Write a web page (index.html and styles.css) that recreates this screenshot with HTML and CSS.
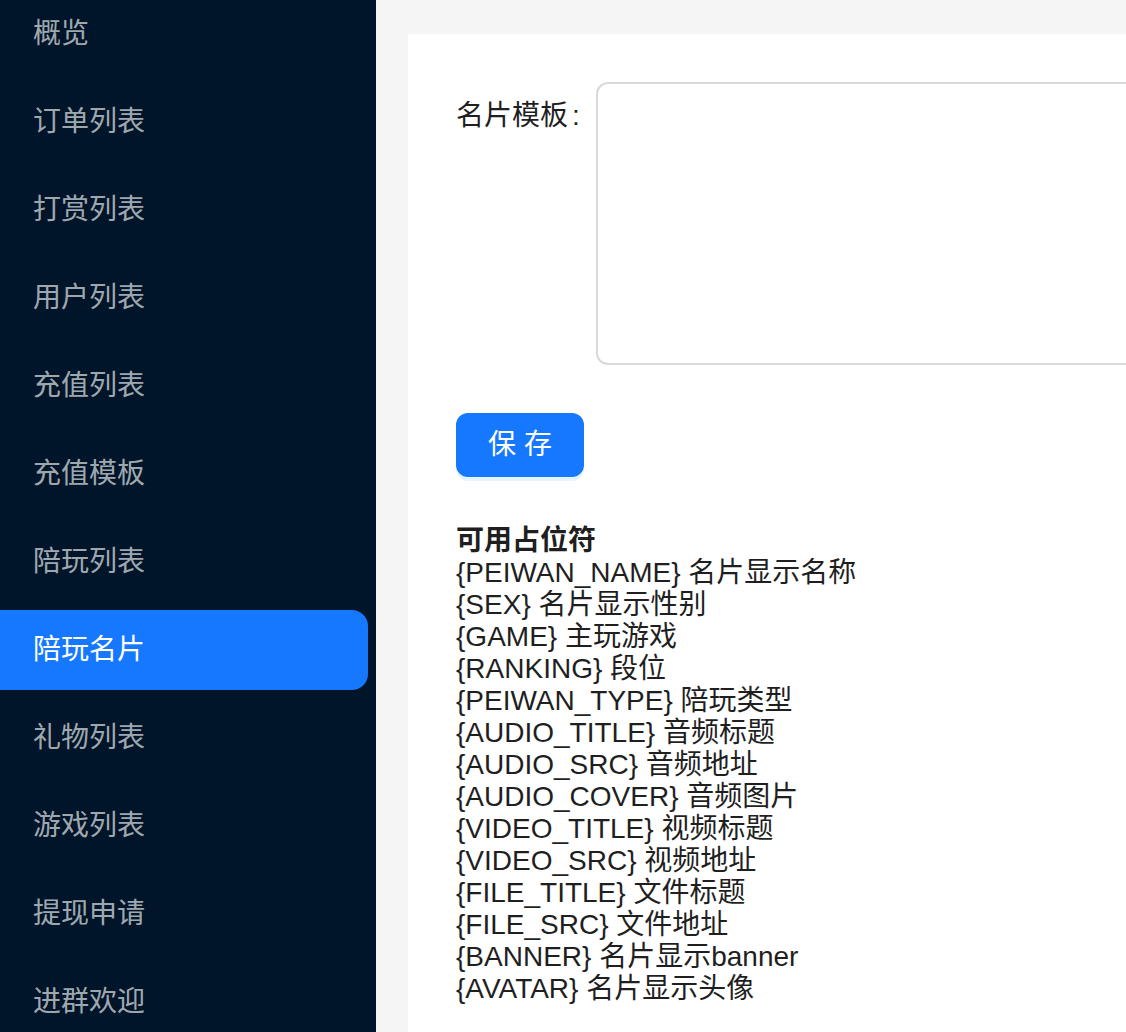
FILE: index.html
```html
<!DOCTYPE html>
<html lang="zh-CN">
<head>
<meta charset="utf-8">
<title>陪玩名片</title>
<link rel="stylesheet" href="styles.css">
</head>
<body>
<div class="layout">
  <aside class="sider">
    <ul class="menu">
      <li class="menu-item">概览</li>
      <li class="menu-item">订单列表</li>
      <li class="menu-item">打赏列表</li>
      <li class="menu-item">用户列表</li>
      <li class="menu-item">充值列表</li>
      <li class="menu-item">充值模板</li>
      <li class="menu-item">陪玩列表</li>
      <li class="menu-item selected">陪玩名片</li>
      <li class="menu-item">礼物列表</li>
      <li class="menu-item">游戏列表</li>
      <li class="menu-item">提现申请</li>
      <li class="menu-item">进群欢迎</li>
    </ul>
  </aside>
  <main class="main">
    <div class="card">
      <div class="form-row">
        <label class="form-label">名片模板<span class="colon">:</span></label>
        <textarea class="textarea"></textarea>
      </div>
      <div class="form-row actions">
        <button class="btn-primary" type="button">保 存</button>
      </div>
      <div class="help">
        <div class="help-title">可用占位符</div>
        <div>{PEIWAN_NAME} 名片显示名称</div>
        <div>{SEX} 名片显示性别</div>
        <div>{GAME} 主玩游戏</div>
        <div>{RANKING} 段位</div>
        <div>{PEIWAN_TYPE} 陪玩类型</div>
        <div>{AUDIO_TITLE} 音频标题</div>
        <div>{AUDIO_SRC} 音频地址</div>
        <div>{AUDIO_COVER} 音频图片</div>
        <div>{VIDEO_TITLE} 视频标题</div>
        <div>{VIDEO_SRC} 视频地址</div>
        <div>{FILE_TITLE} 文件标题</div>
        <div>{FILE_SRC} 文件地址</div>
        <div>{BANNER} 名片显示banner</div>
        <div>{AVATAR} 名片显示头像</div>
      </div>
    </div>
  </main>
</div>
</body>
</html>
```

FILE: styles.css
```css
* { box-sizing: border-box; }
html, body {
  margin: 0;
  padding: 0;
  height: 100%;
  overflow: hidden;
}
body {
  font-family: "Liberation Sans", "Noto Sans CJK SC", sans-serif;
  color: #1f1f1f;
}
.layout {
  display: flex;
  height: 100vh;
}
.sider {
  width: 376px;
  flex: none;
  background: #001529;
  overflow: hidden;
}
.menu {
  list-style: none;
  margin: -6px 0 0 0;
  padding: 0;
  display: flex;
  flex-direction: column;
  gap: 8px;
}
.menu-item {
  flex: none;
  height: 80px;
  line-height: 80px;
  margin-right: 8px;
  padding-left: 33px;
  font-size: 28px;
  color: rgba(255, 255, 255, 0.65);
  border-radius: 0 16px 16px 0;
  white-space: nowrap;
}
.menu-item.selected {
  background: #1677ff;
  color: #fff;
}
.main {
  flex: 1;
  background: #f5f5f5;
  padding: 34px 0 0 32px;
  overflow: hidden;
}
.card {
  width: 1000px;
  min-height: 1100px;
  background: #fff;
  padding: 48px;
}
.form-row {
  display: flex;
  align-items: flex-start;
  margin-bottom: 48px;
}
.form-label {
  height: 64px;
  line-height: 68px;
  font-size: 28px;
  color: #1f1f1f;
  margin-right: 16px;
  white-space: nowrap;
}
.colon {
  margin-left: 4px;
}
.textarea {
  flex: 1;
  height: 283px;
  border: 2px solid #d9d9d9;
  border-radius: 12px;
  resize: none;
  font-size: 28px;
  outline: none;
  background: #fff;
}
.actions {
  margin-bottom: 48px;
}
.btn-primary {
  height: 64px;
  width: 128px;
  padding: 0 30px;
  border: 2px solid #1677ff;
  border-radius: 12px;
  background: #1677ff;
  color: #fff;
  font-family: "Liberation Sans", "Noto Sans CJK SC", sans-serif;
  font-size: 28px;
  line-height: 60px;
  box-shadow: 0 4px 0 rgba(5, 145, 255, 0.1);
  cursor: pointer;
}
.help {
  margin-top: 5px;
  font-size: 28px;
  line-height: 32px;
  color: #1f1f1f;
}
.help-title {
  font-weight: bold;
}
```
